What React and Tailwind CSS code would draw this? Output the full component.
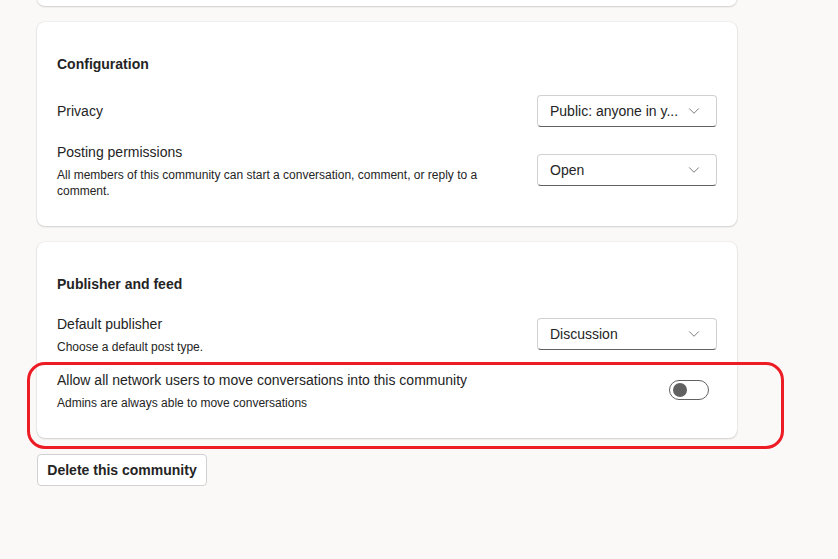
import { ChevronDown } from "lucide-react";

const cardShadow = "shadow-[0_1px_2px_rgba(0,0,0,0.14),0_0_2px_rgba(0,0,0,0.12)]";

function Select({ value }) {
  return (
    <div className="flex h-8 w-[180px] shrink-0 items-center justify-between gap-1 rounded-[4px] border border-[#d1d1d1] border-b-[#616161] bg-white pl-3 pr-[13px] text-sm text-[#242424]">
      <span className="whitespace-nowrap">{value}</span>
      <ChevronDown size={18} strokeWidth={1.1} className="shrink-0 text-[#616161]" />
    </div>
  );
}

function Label({ label, hint }) {
  return (
    <div className="max-w-[430px]">
      <p className="text-sm leading-5 text-[#242424]">{label}</p>
      {hint ? <p className="mt-[5px] text-xs leading-4 text-[#242424]">{hint}</p> : null}
    </div>
  );
}

export default function App() {
  return (
    <main
      className="relative min-h-[559px] w-[838px] overflow-hidden bg-[#faf9f8] text-[#242424]"
      style={{ fontFamily: '"Segoe UI", "Liberation Sans", Arial, sans-serif' }}
    >
      <div className="-mt-[40px] ml-[37px] w-[700px]">
        <div className={"h-[46px] rounded-lg bg-white " + cardShadow} />

        <section className={"mt-4 rounded-lg bg-white px-5 pt-8 pb-[27px] " + cardShadow}>
          <h2 className="text-sm font-bold leading-5">Configuration</h2>
          <div className="mt-[21px] flex items-center justify-between">
            <Label label="Privacy" />
            <Select value="Public: anyone in y..." />
          </div>
          <div className="mt-[15px] flex items-start justify-between">
            <Label
              label="Posting permissions"
              hint="All members of this community can start a conversation, comment, or reply to a comment."
            />
            <div className="mt-3">
              <Select value="Open" />
            </div>
          </div>
        </section>

        <section className={"mt-4 rounded-lg bg-white px-5 pt-8 pb-[27px] " + cardShadow}>
          <h2 className="text-sm font-bold leading-5">Publisher and feed</h2>
          <div className="mt-5 flex items-start justify-between">
            <Label label="Default publisher" hint="Choose a default post type." />
            <div className="mt-1">
              <Select value="Discussion" />
            </div>
          </div>
          <div className="mt-[15px] flex items-start justify-between">
            <Label
              label="Allow all network users to move conversations into this community"
              hint="Admins are always able to move conversations"
            />
            <div className="mr-2 mt-[10px] flex h-5 w-10 items-center rounded-full border border-[#616161] bg-white px-[3px]">
              <span className="h-[14px] w-[14px] rounded-full bg-[#616161]" />
            </div>
          </div>
        </section>

        <button className="mt-4 h-8 w-[170px] rounded-[4px] border border-[#d1d1d1] bg-white text-sm font-bold text-[#242424]">
          Delete this community
        </button>
      </div>

      <div className="pointer-events-none absolute left-[27px] top-[362px] h-[87px] w-[757px] rounded-[18px] border-[3px] border-[#ed1c24]" />
    </main>
  );
}
